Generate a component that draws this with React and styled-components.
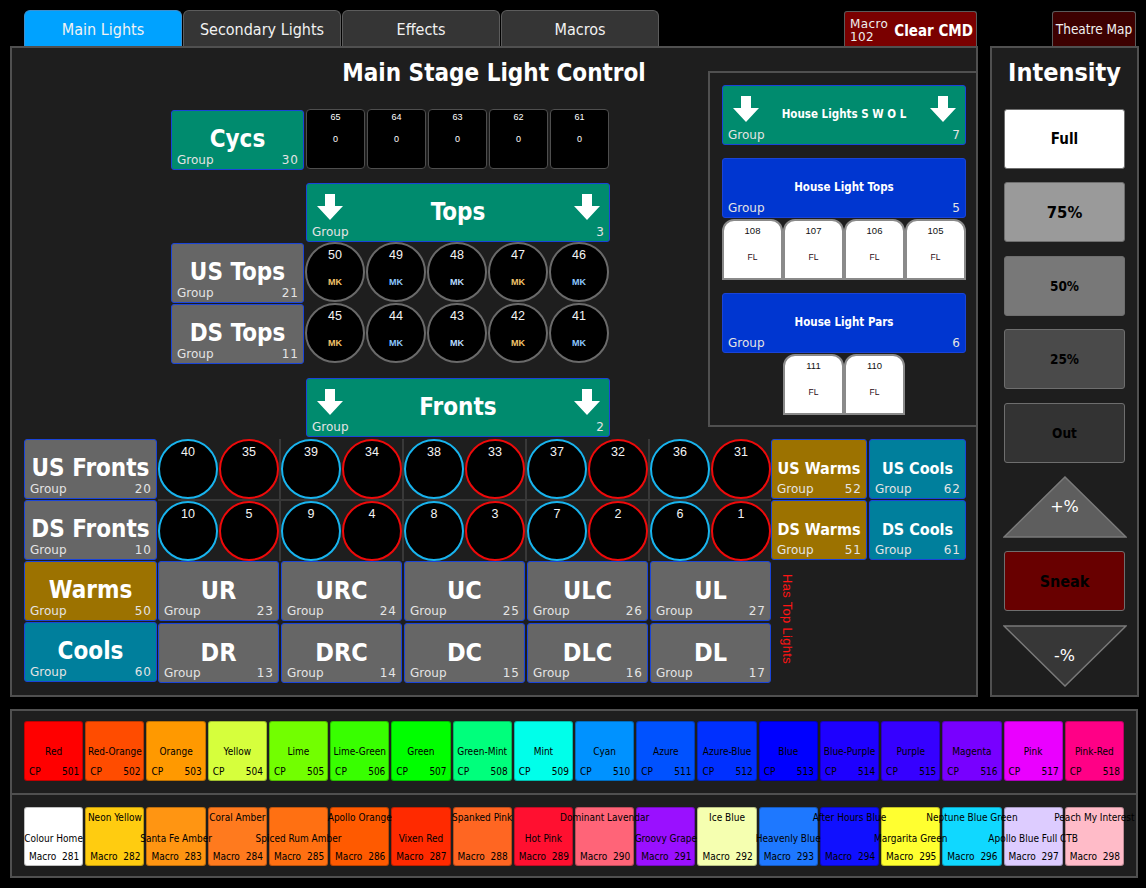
import React from "react";
import styled, { createGlobalStyle } from "styled-components";

const GlobalStyle = createGlobalStyle`
  * { box-sizing: border-box; }
  html, body { margin: 0; padding: 0; background: #000; }
  body {
    font-family: "DejaVu Sans", Verdana, sans-serif;
    font-stretch: condensed;
    color: #fff;
  }
`;

const GREEN = "#008b6e";
const GREY = "#666666";
const GOLD = "#9c7200";
const TEAL = "#007f9c";
const HOUSE = "#0036d0";
const PANEL = "#1e1e1e";
const EDGE = "#505050";

const tabs = ["Main Lights", "Secondary Lights", "Effects", "Macros"];
const cycs = [65, 64, 63, 62, 61];
const usTops = [[50, "#f2c46a"], [49, "#8cc8ff"], [48, "#b8dcff"], [47, "#f2c46a"], [46, "#8cc8ff"]];
const dsTops = [[45, "#f2c46a"], [44, "#8cc8ff"], [43, "#b8dcff"], [42, "#f2c46a"], [41, "#8cc8ff"]];
const usFronts = [[40, 35], [39, 34], [38, 33], [37, 32], [36, 31]];
const dsFronts = [[10, 5], [9, 4], [8, 3], [7, 2], [6, 1]];
const upstage = [["UR", 23], ["URC", 24], ["UC", 25], ["ULC", 26], ["UL", 27]];
const downstage = [["DR", 13], ["DRC", 14], ["DC", 15], ["DLC", 16], ["DL", 17]];

const levels = [
  { label: "Full", bg: "#ffffff", size: 15 },
  { label: "75%", bg: "#9a9a9a", size: 16.5 },
  { label: "50%", bg: "#787878", size: 13.5 },
  { label: "25%", bg: "#4a4a4a", size: 13.5 },
  { label: "Out", bg: "#333333", size: 13.5 },
];

const gels = [
  ["Red", "#ff0000", 501],
  ["Red-Orange", "#ff4c00", 502],
  ["Orange", "#ff9900", 503],
  ["Yellow", "#d6ff3c", 504],
  ["Lime", "#72ff00", 505],
  ["Lime-Green", "#38ff00", 506],
  ["Green", "#00ff00", 507],
  ["Green-Mint", "#00ff7c", 508],
  ["Mint", "#00ffea", 509],
  ["Cyan", "#0092ff", 510],
  ["Azure", "#0052ff", 511],
  ["Azure-Blue", "#0030ff", 512],
  ["Blue", "#0000ff", 513],
  ["Blue-Purple", "#1e00ff", 514],
  ["Purple", "#3600ff", 515],
  ["Magenta", "#7800ff", 516],
  ["Pink", "#ea00ff", 517],
  ["Pink-Red", "#ff0086", 518],
];

const macros = [
  ["Colour Home", "#ffffff", 281, "mid"],
  ["Neon Yellow", "#ffcc10", 282, "top"],
  ["Santa Fe Amber", "#ff9512", 283, "mid"],
  ["Coral Amber", "#ff7a1e", 284, "top"],
  ["Spiced Rum Amber", "#ff7012", 285, "mid"],
  ["Apollo Orange", "#ff5a00", 286, "top"],
  ["Vixen Red", "#ff2a00", 287, "mid"],
  ["Spanked Pink", "#ff6622", 288, "top"],
  ["Hot Pink", "#ff1030", 289, "mid"],
  ["Dominant Lavendar", "#ff6478", 290, "top"],
  ["Groovy Grape", "#9a10ff", 291, "mid"],
  ["Ice Blue", "#f5ffb0", 292, "top"],
  ["Heavenly Blue", "#1e78ff", 293, "mid"],
  ["After Hours Blue", "#1010ff", 294, "top"],
  ["Margarita Green", "#ffff30", 295, "mid"],
  ["Neptune Blue Green", "#10d8ff", 296, "top"],
  ["Apollo Blue Full CTB", "#ddccff", 297, "mid"],
  ["Peach My Interest", "#ffbbc8", 298, "top"],
];

const Arrow = () => (
  <svg width="26" height="26" viewBox="0 0 26 26" aria-hidden="true">
    <path d="M8 0H18V12H26L13 26L0 12H8Z" fill="#fff" />
  </svg>
);

const GroupButton = ({ className, name, num, bg, size = 24, arrows }) => (
  <GroupTile className={className} $bg={bg}>
    {arrows && (
      <ArrowRow>
        <Arrow />
        <Arrow />
      </ArrowRow>
    )}
    <GroupName $size={size}>{name}</GroupName>
    <GroupFoot>
      <span>Group</span>
      <span>{num}</span>
    </GroupFoot>
  </GroupTile>
);

const StepButton = ({ up, label }) => (
  <StepTile>
    <svg width="124" height="62" viewBox="0 0 124 62" aria-hidden="true">
      <polygon
        points={up ? "62,1 123,61 1,61" : "1,1 123,1 62,61"}
        fill={up ? "#5e5e5e" : "#373737"}
        stroke="#7a7a7a"
        strokeWidth="1.5"
      />
    </svg>
    <StepLabel>{label}</StepLabel>
  </StepTile>
);

const App = () => {
  return (
    <Page>
      <GlobalStyle />
      <Header>
        <TabBar>
          {tabs.map((t, i) => (
            <Tab key={t} $active={i === 0}>
              {t}
            </Tab>
          ))}
        </TabBar>
        <ClearCmd>
          <MacroTag>
            Macro
            <br />
            102
          </MacroTag>
          <ClearLabel>Clear CMD</ClearLabel>
        </ClearCmd>
        <TheatreMap>Theatre Map</TheatreMap>
      </Header>

      <MainRow>
        <StagePanel>
          <TopSection>
            <StageTitle>Main Stage Light Control</StageTitle>

            <LeftStage>
              <StageLabel name="Cycs" num={30} bg={GREEN} />
              {cycs.map((n) => (
                <ChannelBox key={n}>
                  <span>{n}</span>
                  <span>0</span>
                </ChannelBox>
              ))}

              <StageBar name="Tops" num={3} bg={GREEN} arrows $mt={13} />

              <StageLabel name="US Tops" num={21} bg={GREY} />
              {usTops.map(([n, c]) => (
                <Lamp key={n} $ring="#6a6a6a">
                  <LampNum>{n}</LampNum>
                  <LampTag $c={c}>MK</LampTag>
                </Lamp>
              ))}
              <StageLabel name="DS Tops" num={11} bg={GREY} />
              {dsTops.map(([n, c]) => (
                <Lamp key={n} $ring="#6a6a6a">
                  <LampNum>{n}</LampNum>
                  <LampTag $c={c}>MK</LampTag>
                </Lamp>
              ))}

              <StageBar name="Fronts" num={2} bg={GREEN} arrows $mt={14} />
            </LeftStage>

            <HousePanel>
              <HouseBar name="House Lights S W O L" num={7} bg={GREEN} size={11.5} arrows $mt={0} />
              <HouseBar name="House Light Tops" num={5} bg={HOUSE} size={11.5} $mt={13} />
              <FixtureRow>
                {[108, 107, 106, 105].map((n) => (
                  <Fixture key={n}>
                    <span>{n}</span>
                    <FixtureTag>FL</FixtureTag>
                  </Fixture>
                ))}
              </FixtureRow>
              <HouseBar name="House Light Pars" num={6} bg={HOUSE} size={11.5} $mt={13} />
              <FixtureRow>
                {[111, 110].map((n) => (
                  <Fixture key={n}>
                    <span>{n}</span>
                    <FixtureTag>FL</FixtureTag>
                  </Fixture>
                ))}
              </FixtureRow>
            </HousePanel>
          </TopSection>

          <FrontGrid>
            <FrontLabel name="US Fronts" num={20} bg={GREY} $col={1} $row={1} $w={133} />
            <FrontLabel name="DS Fronts" num={10} bg={GREY} $col={1} $row={2} $w={133} />
            <FrontLabel name="Warms" num={50} bg={GOLD} $col={1} $row={3} $w={133} />
            <FrontLabel name="Cools" num={60} bg={TEAL} $col={1} $row={4} $w={133} />

            <CircleBank>
              {[...usFronts, ...dsFronts].map(([a, b]) => (
                <PairCell key={a}>
                  <Lamp $ring="#18b4ee">
                    <LampNum>{a}</LampNum>
                  </Lamp>
                  <Lamp $ring="#ee0a0a">
                    <LampNum>{b}</LampNum>
                  </Lamp>
                </PairCell>
              ))}
            </CircleBank>

            <FrontLabel name="US Warms" num={52} bg={GOLD} size={16} $col={3} $row={1} $w={96} />
            <FrontLabel name="US Cools" num={62} bg={TEAL} size={16} $col={4} $row={1} $w={97} />
            <FrontLabel name="DS Warms" num={51} bg={GOLD} size={16} $col={3} $row={2} $w={96} />
            <FrontLabel name="DS Cools" num={61} bg={TEAL} size={16} $col={4} $row={2} $w={97} />

            <PositionBank>
              {[...upstage, ...downstage].map(([name, num]) => (
                <GroupButton key={name} name={name} num={num} bg={GREY} size={25} />
              ))}
            </PositionBank>

            <TopLightsNote>Has Top Lights</TopLightsNote>
          </FrontGrid>
        </StagePanel>

        <IntensityPanel>
          <IntensityTitle>Intensity</IntensityTitle>
          {levels.map((l) => (
            <LevelButton key={l.label} $bg={l.bg} $size={l.size}>
              {l.label}
            </LevelButton>
          ))}
          <StepButton up label="+%" />
          <LevelButton $bg="#680000" $size={16}>
            Sneak
          </LevelButton>
          <StepButton label="-%" />
        </IntensityPanel>
      </MainRow>

      <PalettePanel>
        <ChipRow $pad="10px 12px 12px">
          {gels.map(([name, bg, num]) => (
            <GelChip key={num} $bg={bg}>
              <GelName>{name}</GelName>
              <ChipFoot>
                <span>CP</span>
                <span>{num}</span>
              </ChipFoot>
            </GelChip>
          ))}
        </ChipRow>
        <ChipRow $pad="12px 12px 10px">
          {macros.map(([name, bg, num, pos]) => (
            <MacroChip key={num} $bg={bg}>
              <MacroLabel $pos={pos}>
                <span>{name}</span>
              </MacroLabel>
              <ChipFoot>
                <span>Macro</span>
                <span>{num}</span>
              </ChipFoot>
            </MacroChip>
          ))}
        </ChipRow>
      </PalettePanel>
    </Page>
  );
};

const Page = styled.div`
  width: 1146px;
  height: 888px;
  padding: 10px 0 0 10px;
  overflow: hidden;
`;

const Header = styled.div`
  display: flex;
  align-items: flex-end;
  width: 1128px;
  height: 36px;
`;

const TabBar = styled.div`
  display: flex;
  gap: 1px;
  margin-left: 14px;
  align-self: stretch;
`;

const Tab = styled.div`
  width: 158px;
  display: flex;
  align-items: center;
  justify-content: center;
  padding-top: 2px;
  background: ${(p) => (p.$active ? "#00a2ff" : "#353535")};
  border: 1px solid ${(p) => (p.$active ? "#3e8fce" : "#5c5c5c")};
  border-bottom: none;
  border-radius: 6px 6px 0 0;
  font-size: 16px;
  color: #f2f2f2;
`;

const ClearCmd = styled.div`
  margin-left: auto;
  width: 133px;
  height: 35px;
  display: flex;
  align-items: center;
  gap: 6px;
  padding: 3px 5px 0;
  background: #7a0000;
  border: 1px solid #5a5a5a;
  border-bottom: none;
  border-radius: 3px 3px 0 0;
`;

const MacroTag = styled.div`
  font-size: 12px;
  line-height: 13px;
  font-stretch: normal;
  letter-spacing: 0.4px;
  color: #eee;
`;

const ClearLabel = styled.div`
  font-weight: bold;
  font-size: 15px;
  white-space: nowrap;
`;

const TheatreMap = styled.div`
  margin: 0 2px 0 75px;
  width: 84px;
  height: 35px;
  display: flex;
  align-items: center;
  justify-content: center;
  background: #3d0000;
  border: 1px solid #5a5a5a;
  border-bottom: none;
  border-radius: 3px 3px 0 0;
  font-size: 13.5px;
  color: #f0f0f0;
  white-space: nowrap;
`;

const MainRow = styled.div`
  display: flex;
  gap: 12px;
  height: 651px;
`;

const StagePanel = styled.section`
  width: 968px;
  background: ${PANEL};
  border: 2px solid ${EDGE};
  display: flex;
  flex-direction: column;
`;

const TopSection = styled.div`
  display: grid;
  grid-template-columns: 696px 1fr;
  grid-template-rows: 52px auto;
`;

const StageTitle = styled.h1`
  grid-column: 1 / -1;
  grid-row: 1;
  margin: 0;
  text-align: center;
  font-size: 24px;
  line-height: 50px;
  font-weight: bold;
`;

const LeftStage = styled.div`
  grid-column: 1;
  grid-row: 2;
  display: grid;
  grid-template-columns: 134px repeat(5, 61px);
  align-content: start;
  padding: 9px 0 0 159px;
`;

const GroupTile = styled.div`
  display: grid;
  grid-template-columns: minmax(0, 1fr);
  background: ${(p) => p.$bg};
  border: 1px solid #1a44d8;
  border-radius: 3px;
  color: #fff;
  overflow: hidden;
  & > * {
    grid-area: 1 / 1;
  }
`;

const ArrowRow = styled.div`
  align-self: start;
  display: flex;
  justify-content: space-between;
  padding: 10px 9px 0 10px;
`;

const GroupName = styled.div`
  align-self: center;
  justify-self: center;
  white-space: nowrap;
  font-weight: bold;
  font-size: ${(p) => p.$size}px;
  line-height: 1.15;
`;

const GroupFoot = styled.div`
  align-self: end;
  display: flex;
  justify-content: space-between;
  padding: 0 4px 2px 5px;
  font-size: 12px;
  line-height: 14px;
  font-stretch: normal;
  color: #e4e4e4;
  span:last-child {
    letter-spacing: 1px;
  }
`;

const StageLabel = styled(GroupButton)`
  width: 133px;
  height: 60px;
  margin-top: 1px;
  align-self: start;
`;

const StageBar = styled(GroupButton)`
  grid-column: 2 / -1;
  height: 59px;
  margin: ${(p) => p.$mt}px 0 0 1px;
`;

const ChannelBox = styled.div`
  width: 59px;
  height: 60px;
  margin-left: 1px;
  align-self: start;
  display: flex;
  flex-direction: column;
  align-items: center;
  padding-top: 2px;
  background: #000;
  border: 1.5px solid #4e4e4e;
  border-radius: 4px;
  font-family: "Liberation Sans", Arial, sans-serif;
  font-size: 9px;
  line-height: 10px;
  span + span {
    margin-top: 12px;
  }
`;

const Lamp = styled.div`
  width: 60px;
  height: 60px;
  flex-shrink: 0;
  align-self: start;
  display: flex;
  flex-direction: column;
  align-items: center;
  border-radius: 50%;
  background: #000;
  border: 2px solid ${(p) => p.$ring};
  font-family: "Liberation Sans", Arial, sans-serif;
`;

const LampNum = styled.div`
  margin-top: 3.5px;
  font-size: 12.5px;
  line-height: 14px;
  color: #f4f4f4;
`;

const LampTag = styled.div`
  margin-top: 15px;
  font-size: 9px;
  line-height: 10px;
  font-weight: bold;
  color: ${(p) => p.$c};
`;

const HousePanel = styled.div`
  grid-column: 2;
  grid-row: 1 / span 2;
  align-self: start;
  margin-top: 23px;
  height: 356px;
  border: 2px solid ${EDGE};
  border-right: none;
  padding: 12px 10px 0 12px;
  display: flex;
  flex-direction: column;
`;

const HouseBar = styled(GroupButton)`
  height: 60px;
  flex-shrink: 0;
  margin-top: ${(p) => p.$mt}px;
`;

const FixtureRow = styled.div`
  display: flex;
  justify-content: center;
  margin-top: 1px;
`;

const Fixture = styled.div`
  width: 61px;
  height: 61px;
  display: flex;
  flex-direction: column;
  align-items: center;
  padding-top: 4px;
  background: #fff;
  border: 2px solid #8a8a8a;
  border-radius: 12px 12px 0 0;
  font-family: "Liberation Sans", Arial, sans-serif;
  font-size: 9.5px;
  line-height: 12px;
  color: #111;
`;

const FixtureTag = styled.span`
  margin-top: 15px;
  font-size: 8.5px;
  line-height: 10px;
  color: #2a0a14;
`;

const FrontGrid = styled.div`
  display: grid;
  grid-template-columns: 134px 613px 98px 97px;
  grid-template-rows: repeat(4, 61px);
  margin: 2px 0 0 12px;
`;

const FrontLabel = styled(GroupButton)`
  grid-column: ${(p) => p.$col};
  grid-row: ${(p) => p.$row};
  width: ${(p) => p.$w}px;
  height: 60px;
`;

const CircleBank = styled.div`
  grid-column: 2;
  grid-row: 1 / span 2;
  display: grid;
  grid-template-columns: repeat(5, 1fr);
  gap: 2px;
  background: #383838;
`;

const PairCell = styled.div`
  display: flex;
  justify-content: space-between;
  background: ${PANEL};
`;

const PositionBank = styled.div`
  grid-column: 2;
  grid-row: 3 / span 2;
  display: grid;
  grid-template-columns: repeat(5, minmax(0, 1fr));
  grid-template-rows: repeat(2, 1fr);
  gap: 2px;
`;

const TopLightsNote = styled.div`
  grid-column: 3;
  grid-row: 3 / span 2;
  justify-self: start;
  align-self: start;
  margin: 13px 0 0 9px;
  writing-mode: vertical-rl;
  font-family: "Liberation Sans", Arial, sans-serif;
  font-size: 13px;
  letter-spacing: 0.3px;
  color: #ff1414;
`;

const IntensityPanel = styled.aside`
  width: 149px;
  display: flex;
  flex-direction: column;
  align-items: center;
  gap: 13.4px;
  padding-top: 12px;
  background: ${PANEL};
  border: 2px solid ${EDGE};
`;

const IntensityTitle = styled.div`
  margin-bottom: 9.6px;
  font-size: 25px;
  line-height: 26px;
  font-weight: bold;
`;

const LevelButton = styled.div`
  width: 121px;
  height: 60px;
  flex-shrink: 0;
  display: flex;
  align-items: center;
  justify-content: center;
  background: ${(p) => p.$bg};
  border: 1px solid #6e6e6e;
  border-radius: 3px;
  color: #000;
  font-weight: bold;
  font-size: ${(p) => p.$size}px;
`;

const StepTile = styled.div`
  display: grid;
  width: 124px;
  height: 62px;
  flex-shrink: 0;
  & > * {
    grid-area: 1 / 1;
  }
`;

const StepLabel = styled.span`
  align-self: center;
  justify-self: center;
  font-size: 16px;
  font-stretch: normal;
  color: #fff;
`;

const PalettePanel = styled.section`
  margin-top: 12px;
  width: 1128px;
  height: 169px;
  overflow: hidden;
  background: ${PANEL};
  border: 2px solid ${EDGE};
  display: flex;
  flex-direction: column;
`;

const ChipRow = styled.div`
  display: grid;
  grid-template-columns: repeat(18, minmax(0, 1fr));
  gap: 2px;
  padding: ${(p) => p.$pad};
  & + & {
    border-top: 2px solid ${EDGE};
  }
`;

const GelChip = styled.div`
  display: grid;
  grid-template-columns: minmax(0, 1fr);
  height: 60px;
  background: ${(p) => p.$bg};
  border: 1px solid rgba(0, 0, 0, 0.25);
  border-radius: 3px;
  color: #000;
  font-size: 10px;
  & > * {
    grid-area: 1 / 1;
  }
`;

const GelName = styled.div`
  align-self: center;
  justify-self: center;
  white-space: nowrap;
`;

const ChipFoot = styled.div`
  align-self: end;
  display: flex;
  justify-content: space-between;
  padding: 0 3px 2px 4px;
  font-size: 10px;
  line-height: 12px;
  color: #000;
`;

const MacroChip = styled(GelChip)`
  height: 59px;
`;

const MacroLabel = styled.div`
  position: relative;
  z-index: 1;
  align-self: start;
  display: flex;
  justify-content: center;
  padding-top: ${(p) => (p.$pos === "top" ? 4 : 25)}px;
  line-height: 12px;
  white-space: nowrap;
`;

export default App;
